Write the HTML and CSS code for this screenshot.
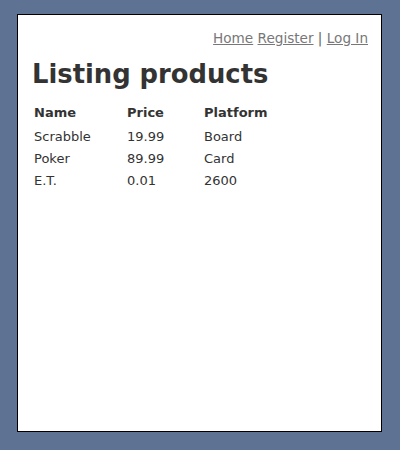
FILE: index.html
```html
<!DOCTYPE html>
<html>
<head>
<meta charset="utf-8">
<link rel="stylesheet" href="styles.css">
</head>
<body>
<div class="page">
  <div class="nav">
    <a href="#">Home</a> <a href="#">Register</a> | <a href="#">Log In</a>
  </div>
  <h1 class="title">Listing products</h1>
  <table class="products">
    <tr><th>Name</th><th>Price</th><th>Platform</th></tr>
    <tr><td>Scrabble</td><td>19.99</td><td>Board</td></tr>
    <tr><td>Poker</td><td>89.99</td><td>Card</td></tr>
    <tr><td>E.T.</td><td>0.01</td><td>2600</td></tr>
  </table>
</div>
</body>
</html>
```
FILE: styles.css
```css
html, body {
  margin: 0;
  padding: 0;
}
body {
  background: #5e7293;
  font-family: "DejaVu Sans", Verdana, sans-serif;
  color: #333;
  padding: 14px 0 0 17px;
  height: 450px;
  box-sizing: border-box;
}
.page {
  width: 365px;
  height: 418px;
  box-sizing: border-box;
  background: #fff;
  border: 1px solid #000;
  padding: 15px 13px 0 14px;
}
.nav {
  text-align: right;
  font-size: 13.6px;
  color: #666;
}
.nav a {
  color: #777;
}
.title {
  font-size: 25.8px;
  font-weight: bold;
  margin: 13px 0 14px 0;
}
.products {
  border-collapse: separate;
  border-spacing: 0;
  font-size: 13px;
}
.products th {
  text-align: left;
  padding: 2px 2px 5px 2px;
}
.products td {
  padding: 2px 2px;
  height: 18px;
}
.products th:nth-child(1), .products td:nth-child(1) { width: 89px; }
.products th:nth-child(2), .products td:nth-child(2) { width: 73px; }
```
